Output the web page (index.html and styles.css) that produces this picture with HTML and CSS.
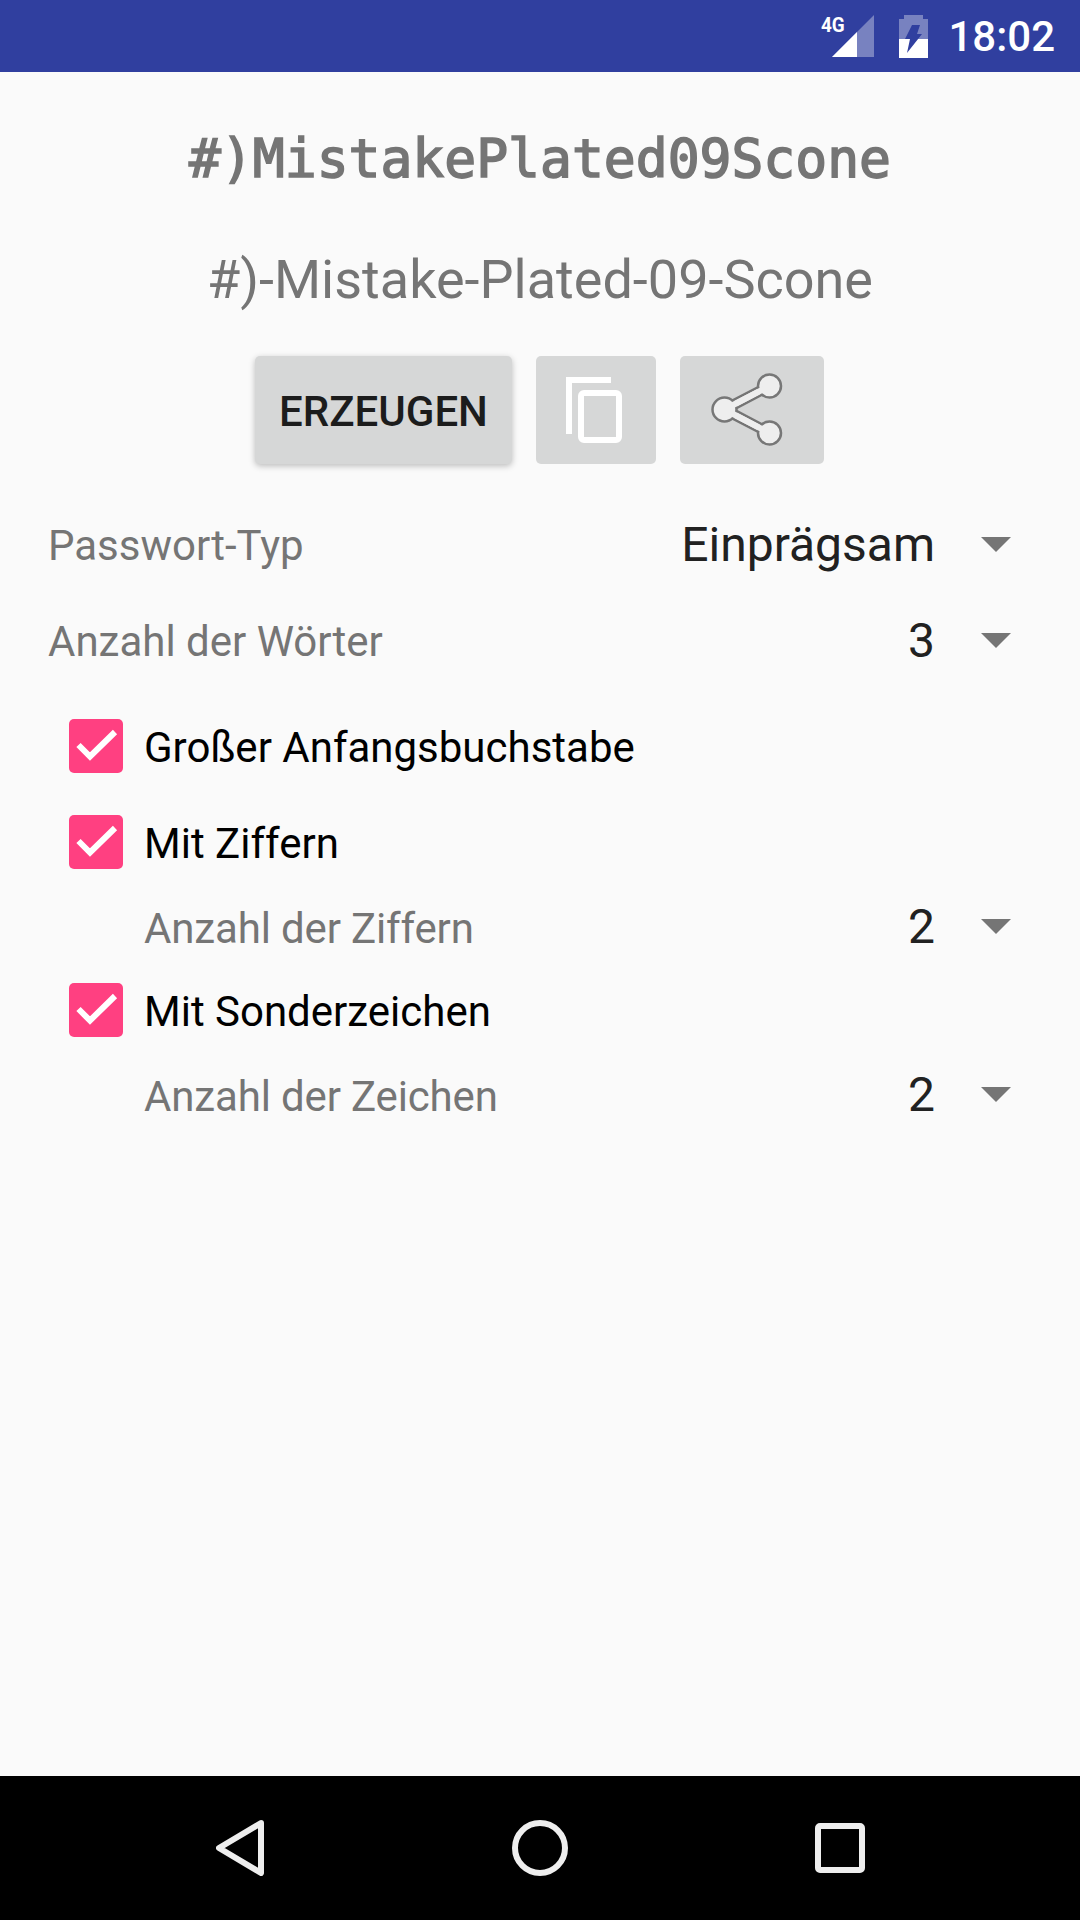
FILE: index.html
```html
<!DOCTYPE html>
<html lang="de">
<head>
    <meta charset="UTF-8">
    <meta name="viewport" content="width=device-width, initial-scale=1.0">
    <title>Passwort</title>
    <link rel="stylesheet" href="styles.css">
</head>
<body>

<div class="status-bar">
    <div class="signal">
        <span class="net-type">4G</span>
        <svg class="signal-icon" width="42" height="42" viewBox="0 0 42 42">
            <polygon points="42,0 42,42 0,42" fill="#fff" opacity="0.35"/>
            <polygon points="25,17 25,42 0,42" fill="#fff"/>
        </svg>
    </div>
    <svg class="battery" width="29" height="43" viewBox="0 0 29 43">
        <path d="M5 0h19v4h5v39H0V4h5z" fill="#fff" opacity="0.35"/>
        <path d="M0 24h29v19H0z" fill="#fff"/>
        <polygon points="13,10 21,10 18,19 23,19 8,38 11,24 6,24" fill="#303f9f"/>
    </svg>
    <span class="clock">18:02</span>
</div>

<div class="content">
    <div class="password">#)MistakePlated09Scone</div>
    <div class="password-words">#)-Mistake-Plated-09-Scone</div>

    <div class="actions">
        <button class="btn btn-main">ERZEUGEN</button>
        <button class="btn btn-copy">
            <svg width="56" height="66" viewBox="0 0 56 66">
                <path d="M3 57V3h42" fill="none" stroke="#fff" stroke-width="6"/>
                <rect x="15" y="16" width="38" height="47" rx="3" fill="none" stroke="#fff" stroke-width="6"/>
            </svg>
        </button>
        <button class="btn btn-share">
            <svg width="72" height="74" viewBox="0 0 72 74">
                <path d="M13.5 36.5L58.5 13M13.5 36.5L58.5 60" stroke="#757575" stroke-width="11"/>
                <path d="M13.5 36.5L58.5 13M13.5 36.5L58.5 60" stroke="#eee" stroke-width="6"/>
                <circle cx="13.5" cy="36.5" r="12" fill="#eee" stroke="#777" stroke-width="2.5"/>
                <circle cx="58.5" cy="13" r="11.5" fill="#eee" stroke="#777" stroke-width="2.5"/>
                <circle cx="58.5" cy="60" r="11.5" fill="#eee" stroke="#777" stroke-width="2.5"/>
                <path d="M13.5 36.5L58.5 13M13.5 36.5L58.5 60" stroke="#eee" stroke-width="6"/>
            </svg>
        </button>
    </div>

    <div class="row row-first">
        <span class="label">Passwort-Typ</span>
        <span class="value value-large">Einprägsam</span>
        <span class="arrow"></span>
    </div>
    <div class="row">
        <span class="label">Anzahl der Wörter</span>
        <span class="value">3</span>
        <span class="arrow"></span>
    </div>

    <div class="check-row check-first">
        <span class="checkbox"><svg width="54" height="54" viewBox="0 0 54 54"><path d="M9.5 26L21 37.5 46 13" fill="none" stroke="#fff" stroke-width="6"/></svg></span>
        <span class="check-label">Großer Anfangsbuchstabe</span>
    </div>
    <div class="check-row">
        <span class="checkbox"><svg width="54" height="54" viewBox="0 0 54 54"><path d="M9.5 26L21 37.5 46 13" fill="none" stroke="#fff" stroke-width="6"/></svg></span>
        <span class="check-label">Mit Ziffern</span>
    </div>
    <div class="row row-sub">
        <span class="label">Anzahl der Ziffern</span>
        <span class="value">2</span>
        <span class="arrow"></span>
    </div>
    <div class="check-row">
        <span class="checkbox"><svg width="54" height="54" viewBox="0 0 54 54"><path d="M9.5 26L21 37.5 46 13" fill="none" stroke="#fff" stroke-width="6"/></svg></span>
        <span class="check-label">Mit Sonderzeichen</span>
    </div>
    <div class="row row-sub">
        <span class="label">Anzahl der Zeichen</span>
        <span class="value">2</span>
        <span class="arrow"></span>
    </div>
</div>

<div class="nav-bar">
    <svg width="48" height="56" viewBox="0 0 48 56">
        <path d="M45 3L3 28l42 25z" fill="none" stroke="#eee" stroke-width="6" stroke-linejoin="round"/>
    </svg>
    <svg width="56" height="56" viewBox="0 0 56 56">
        <circle cx="28" cy="28" r="25" fill="none" stroke="#eee" stroke-width="6"/>
    </svg>
    <svg width="50" height="50" viewBox="0 0 50 50">
        <rect x="3" y="3" width="44" height="44" rx="2" fill="none" stroke="#eee" stroke-width="6"/>
    </svg>
</div>

</body>
</html>
```

FILE: styles.css
```css
* {
    box-sizing: border-box;
}
body {
    margin: 0;
    width: 1080px;
    height: 1920px;
    display: flex;
    flex-direction: column;
    font-family: Roboto, sans-serif;
    background: #fafafa;
}
.status-bar {
    height: 72px;
    background: #303f9f;
    display: flex;
    align-items: center;
    justify-content: flex-end;
    padding-right: 25px;
    color: white;
}
.signal {
    position: relative;
    width: 53px;
    height: 42px;
    display: flex;
    justify-content: flex-end;
}
.net-type {
    position: absolute;
    left: 0;
    top: 0;
    font-size: 21px;
    line-height: 20px;
    font-weight: 700;
    transform: scaleX(0.9);
    transform-origin: left;
}
.battery {
    margin-left: 25px;
}
.clock {
    margin-left: 20px;
    font-size: 42px;
    font-weight: 500;
}
.content {
    flex: 1;
}
.password {
    margin-top: 51px;
    height: 72px;
    line-height: 72px;
    text-align: center;
    font-family: "DejaVu Sans Mono", monospace;
    font-size: 53px;
    font-weight: normal;
    -webkit-text-stroke: 1.6px #757575;
    color: #757575;
}
.password-words {
    margin-top: 49px;
    height: 72px;
    line-height: 72px;
    text-align: center;
    font-size: 54px;
    color: #757575;
}
.actions {
    margin-top: 40px;
    height: 109px;
    padding-left: 255px;
    display: flex;
    gap: 24px;
}
.btn {
    border: none;
    padding: 0;
    height: 108px;
    border-radius: 5px;
    background: #d6d7d7;
    display: flex;
    align-items: center;
    justify-content: center;
}
.btn-main {
    width: 257px;
    padding-top: 3px;
    font-family: Roboto, sans-serif;
    font-size: 42px;
    font-weight: 500;
    color: #1c1c1c;
    box-shadow: 0 2px 6px rgba(0, 0, 0, 0.25);
}
.btn-copy {
    width: 120px;
    padding-right: 4px;
}
.btn-share {
    width: 144px;
    padding-right: 10px;
}
.row {
    height: 96px;
    display: flex;
    align-items: center;
    padding: 0 69px 0 48px;
}
.row-first {
    margin-top: 31px;
}
.row-sub {
    height: 72px;
    padding-left: 144px;
}
.row-sub .label {
    margin-top: 5px;
    letter-spacing: -0.15px;
}
.label {
    margin-top: 2px;
    font-size: 42px;
    color: #757575;
    flex: 1;
}
.value {
    font-size: 48px;
    color: #212121;
}
.arrow {
    margin-left: 46px;
    width: 0;
    height: 0;
    border-left: 15px solid transparent;
    border-right: 15px solid transparent;
    border-top: 15px solid #757575;
}
.check-row {
    height: 96px;
    display: flex;
    align-items: center;
    padding-left: 69px;
}
.check-first {
    margin-top: 10px;
}
.checkbox {
    width: 54px;
    height: 54px;
    border-radius: 5px;
    background: #ff4081;
    display: block;
}
.check-label {
    margin-left: 21px;
    margin-top: 2px;
    font-size: 42px;
    color: #000;
}
.nav-bar {
    height: 144px;
    background: #000;
    display: flex;
    align-items: center;
    padding-left: 216px;
    gap: 247.5px;
}
```
